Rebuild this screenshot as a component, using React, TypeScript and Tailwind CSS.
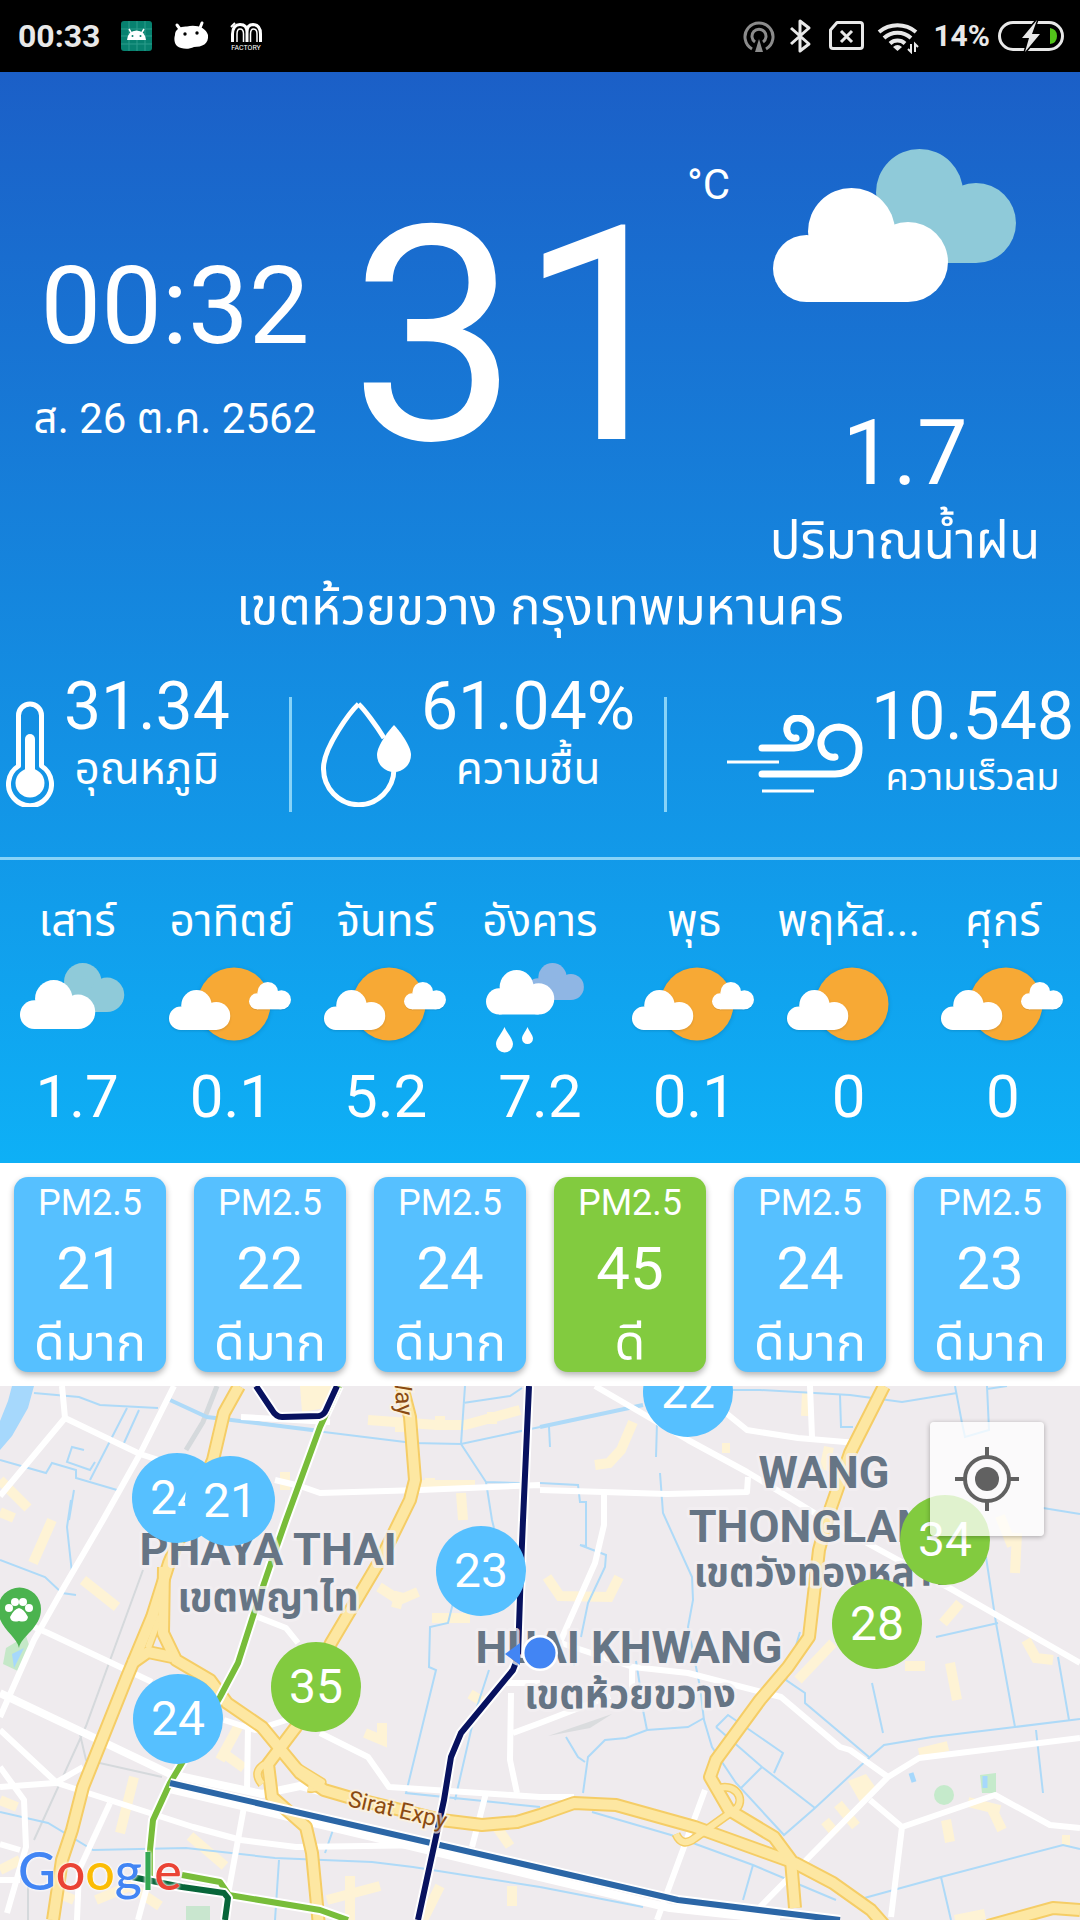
import { clsx } from "clsx";

type IconKind = "cloudy" | "partly" | "sunCloud" | "rain";

const STATS = [
  { id: "temp", value: "31.34", label: "อุณหภูมิ" },
  { id: "humidity", value: "61.04%", label: "ความชื้น" },
  { id: "wind", value: "10.548", label: "ความเร็วลม" },
];

const FORECAST: { day: string; icon: IconKind; rain: string }[] = [
  { day: "เสาร์", icon: "cloudy", rain: "1.7" },
  { day: "อาทิตย์", icon: "partly", rain: "0.1" },
  { day: "จันทร์", icon: "partly", rain: "5.2" },
  { day: "อังคาร", icon: "rain", rain: "7.2" },
  { day: "พุธ", icon: "partly", rain: "0.1" },
  { day: "พฤหัส...", icon: "sunCloud", rain: "0" },
  { day: "ศุกร์", icon: "partly", rain: "0" },
];

const AIR = [
  { pm: 21, level: "ดีมาก", good: false },
  { pm: 22, level: "ดีมาก", good: false },
  { pm: 24, level: "ดีมาก", good: false },
  { pm: 45, level: "ดี", good: true },
  { pm: 24, level: "ดีมาก", good: false },
  { pm: 23, level: "ดีมาก", good: false },
];

// marker centres on the 1080 x 534 map canvas
const MARKERS = [
  { pm: 24, x: 177, y: 112, green: false },
  { pm: 21, x: 230, y: 115, green: false },
  { pm: 22, x: 688, y: 6, green: false },
  { pm: 23, x: 481, y: 185, green: false },
  { pm: 24, x: 178, y: 333, green: false },
  { pm: 35, x: 316, y: 301, green: true },
  { pm: 34, x: 945, y: 154, green: true },
  { pm: 28, x: 877, y: 238, green: true },
];

const WATER = [
  "M34 7L79 11L100 19L158 22",
  "M241 34L324 46L413 57L461 58L540 41",
  "M733 4H760L850 9L902 16L957 7",
  "M840 9L841 41H853",
  "M955 0L962 37L965 51L989 44L987 0M987 3L1007 0",
  "M549 41L550 61",
  "M657 37L656 71M660 87L663 127L692 191L693 214L688 241L700 301L704 334L712 361L736 397L784 449L815 422L870 371L884 359L932 351L1015 341L1080 333",
  "M540 97L578 99L580 116H586V160L580 159L606 169L605 181L588 217L581 251",
  "M800 246L786 294L805 307V317L869 371",
  "M986 171L996 237L1015 341M936 251L998 237M1058 271L1069 334M1036 344L1043 407",
  "M1043 122L1080 128M872 297L883 347",
  "M716 341L728 329L783 367L774 387M716 341L762 381L815 422M762 381L741 402",
  "M704 332L688 341L647 344L626 352L605 354L588 371L583 407M643 324L647 344M566 351L578 371L585 376",
  "M540 501L643 521M592 426L671 449L753 479L836 514M753 479L743 514M857 514L941 491L1063 459L1080 463M941 491L951 534",
  "M0 174L45 191L62 207L76 209M71 114L67 141L72 187",
  "M0 426L48 437L93 464L186 462L275 472L372 476L413 481L540 501",
  "M465 0L461 58L486 96L492 134L494 142M486 96L520 97M463 17L510 10L522 2",
  "M453 217L448 237L430 241L429 281L436 284L406 407L540 421M489 284L475 327L455 414",
  "M127 22L90 94M139 24L124 57M84 64L72 61L67 76L90 84L95 76M0 74L46 87L52 77L76 84V92L117 104M74 104L69 134",
  "M334 441L325 467M279 474L275 534M575 250L574 280M636 275L640 300",
];

const BLOCKS = [
  "M368 34L437 39H465L520 24M400 34V46M440 30V44M492 26V38",
  "M417 99H475M461 107L463 134M430 92V106M285 86V104",
  "M83 194L117 221M52 134L33 177M379 201L399 214L418 206M400 206L396 222",
  "M0 94L28 122M0 126L14 132M0 414L17 421M0 484L20 474M134 391L120 447M238 341L220 374M222 366L244 382M365 347L382 354V337",
  "M96 514L130 500L160 520M190 450L225 480M327 514L380 500M350 490V534M60 508L74 514M420 540L440 500",
  "M547 191L560 210L609 211L619 191M633 36L621 64L609 77L595 79M722 62H730M807 7L806 30",
  "M829 61L824 84M833 257L798 294M943 237L960 217M950 277L957 314M1026 254L1036 272L1053 274M1017 147L1015 187",
  "M919 367L948 360M991 421L1002 444M946 434L950 456M825 435L836 448M838 418L856 440M968 416L1000 424M905 280H925",
  "M470 308L490 320M432 232H470M1000 130L1012 160M955 534L985 528M1062 454H1070M496 440L510 460M512 500V520",
];

const ROADS = [
  "M62 0L65 32L0 110M65 32L140 68L165 76",
  "M174 0L140 68L103 134L64 201L34 254L0 331",
  "M34 241L48 247L152 296",
  "M0 344L57 397L193 441L241 454L296 461L434 459L540 482",
  "M0 401L55 397L83 381M0 381L24 414L26 461L7 527",
  "M110 417L79 484L77 534M244 421L227 514L224 534M248 341L247 404M148 497L138 534",
  "M258 231L286 242L298 257M224 334L255 344L296 331",
  "M320 347L368 371L389 401L540 411H574",
  "M241 31L330 36M275 94L300 100L320 107L420 104L540 99M540 104L667 108L747 106L748 91",
  "M595 0L688 54L747 86L826 134L867 157L953 204L1080 277",
  "M726 27L747 44L798 52L857 57M810 0L812 51",
  "M604 104V139L595 177L561 254M561 257L633 281L688 287L781 311L840 361L850 364L888 391M632 281V307",
  "M513 347L540 337L610 310M511 307L510 374L517 407M500 297H540",
  "M1080 352L919 372L888 391L760 521L750 534",
  "M870 414L902 441L995 409L1050 439L1080 442M902 441L891 531",
  "M705 404L657 534M486 407L472 461M0 458L20 464M0 494H20",
];

const HIGHWAYS = [
  "M239 0L224 27L213 74L169 177L152 231L127 291L83 401L72 444L62 474L53 534",
  "M164 181L163 247L176 274L210 294L227 317L262 341L300 387L324 404L348 411L441 434L482 439L517 436L540 429L574 417L616 419L695 441L795 477L833 497L871 524L885 540",
  "M131 278L148 266L172 271",
  "M402 0L410 31L415 94L410 114L382 171L331 257L296 341L268 378L272 411L306 441L312 467L319 540",
  "M884 0L850 67L829 127L819 164L809 251L788 281L760 314L716 374L710 391L729 424L774 451L791 474L795 522",
  "M1080 524L1053 522L988 540",
];

const RAMPS = [
  "M716 403C735 396 745 412 737 422L695 452Q682 462 676 448",
  "M265 378Q252 386 262 398M296 380L322 396Q318 404 308 402",
  "M160 230L148 262",
];

const TRANSIT = [
  { d: "M339 0L320 41L286 134L272 174L255 224L238 277L220 311L182 377L170 397L153 434L150 464V490", color: "#78bd3a" },
  { d: "M182 489L220 496L229 509L320 524L348 534", color: "#78bd3a" },
  { d: "M132 491L182 501L224 507L228 512L225 534", color: "#08663a" },
  { d: "M170 397L540 482L678 514L840 534", color: "#2b66a6" },
  { d: "M256 0L272 24Q276 31 282 31L319 30Q324 29 326 24L337 0", color: "#08125f" },
  { d: "M529 0L523 134L521 181L518 271L513 284L461 347L451 371L444 414L418 534", color: "#08125f" },
];

const LABELS = [
  { x: 268, y: 179, text: "PHAYA THAI", thai: false },
  { x: 268, y: 225, text: "เขตพญาไท", thai: true },
  { x: 629, y: 277, text: "HUAI KHWANG", thai: false },
  { x: 630, y: 322, text: "เขตห้วยขวาง", thai: true },
  { x: 824, y: 102, text: "WANG", thai: false },
  { x: 824, y: 156, text: "THONGLANG", thai: false },
  { x: 824, y: 200, text: "เขตวังทองหลาง", thai: true },
];

function Cloud({ transform, className }: { transform?: string; className?: string }) {
  return (
    <g transform={transform} className={className}>
      <circle cx="33.5" cy="80.5" r="33.5" />
      <circle cx="78.5" cy="43.5" r="43.5" />
      <circle cx="135" cy="74" r="40" />
      <path d="M33.5 60H135V114H33.5z" />
    </g>
  );
}

function WeatherIcon({ kind }: { kind: IconKind }) {
  return (
    <svg viewBox="0 0 128 96" className="w-32 h-24 overflow-visible" fill="#fff" aria-hidden="true">
      {kind === "cloudy" && (
        <>
          <Cloud transform="translate(36 2) scale(.43)" className="fill-[#8fcad9]" />
          <Cloud transform="translate(7 19) scale(.43)" />
        </>
      )}
      {(kind === "partly" || kind === "sunCloud") && (
        <>
          <circle cx="67" cy="43" r="36.5" className="fill-[#f7a935] drop-shadow-sm" />
          <Cloud transform="translate(2 29) scale(.35)" className="drop-shadow-md" />
        </>
      )}
      {kind === "partly" && <Cloud transform="translate(82 21) scale(.24)" className="drop-shadow-md" />}
      {kind === "rain" && (
        <>
          <Cloud transform="translate(51 2) scale(.325)" className="fill-[#8fb6e4]" />
          <Cloud transform="translate(10 9) scale(.39)" />
          <path d="M28.5 66C31 72 37 78 37 83A8.5 8.5 0 0 1 20 83C20 78 26 72 28.5 66z" />
          <path d="M51.5 66C53 70 57 74 57 77.5A5.5 5.5 0 0 1 46 77.5C46 74 50 70 51.5 66z" />
        </>
      )}
    </svg>
  );
}

function StatIcon({ id }: { id: string }) {
  if (id === "temp") {
    return (
      <svg viewBox="0 0 48 106" className="w-12 h-[106px] mt-[30px] shrink-0" fill="none" stroke="#fff" aria-hidden="true">
        <path d="M12.5 65V14.5a11.5 11.5 0 0 1 23 0V65A21.5 21.5 0 1 1 12.5 65z" strokeWidth="5" strokeLinejoin="round" />
        <path d="M24 38V80" strokeWidth="10" strokeLinecap="round" />
        <circle cx="24" cy="82" r="14.5" fill="#fff" stroke="none" />
      </svg>
    );
  }
  if (id === "humidity") {
    return (
      <svg viewBox="0 0 90 106" className="w-[90px] h-[106px] mt-[30px] shrink-0" fill="none" stroke="#fff" aria-hidden="true">
        <path d="M37.5 3C30 10 2.5 46 2.5 67A35 36 0 0 0 73 68M37.5 3C43 8 55 24 63 37" strokeWidth="5" strokeLinejoin="round" />
        <path d="M73 24C77 28 90 44 90 54A17 17 0 0 1 56 54C56 44 69 28 73 24z" fill="#fff" stroke="none" />
      </svg>
    );
  }
  return (
    <svg viewBox="0 0 136 80" className="w-[136px] h-20 mt-11 shrink-0" fill="none" stroke="#fff" aria-hidden="true">
      <path d="M35 33H67C79 33 84 25 84 15A13 13 0 0 0 71 3C62 3 59 10 60 16C61 21 64 24 69 23" strokeWidth="7" strokeLinecap="round" />
      <path d="M35 59H108C124 59 132 47 132 34A21 21 0 0 0 112 12C100 12 93 21 94 30C95 38 101 43 108 42" strokeWidth="7" strokeLinecap="round" />
      <path d="M0 47H52M35 76H87" strokeWidth="3" />
    </svg>
  );
}

function StatusBar() {
  return (
    <header className="flex items-center h-18 bg-black text-[#e8e8e8] pl-[18px] pr-4">
      <time className="text-[32px] leading-8 font-bold">00:33</time>
      <svg viewBox="0 0 142 32" className="w-[142px] h-8 ml-5" aria-hidden="true">
        <rect x="1" y="1" width="31" height="30" rx="3" fill="#07816f" />
        <path d="M9 1V31M17 1V31M25 1V31M1 9H32M1 16H32M1 24H32" stroke="#2c9c8c" strokeWidth="1" />
        <path d="M7 20a9.5 9.5 0 0 1 19 0z" fill="#fff" />
        <path d="M9 9L12 14M24 9L21 14" stroke="#fff" strokeWidth="1.5" />
        <circle cx="12.5" cy="16" r="1" fill="#07816f" />
        <circle cx="20.5" cy="16" r="1" fill="#07816f" />
        <path d="M55 15C55 9 61 6 67 6.5C75 4 86 7 88 15C89 24 82 27 74 27C68 30 61 29 57 26C54 23 54 18 55 15z" fill="#fff" />
        <path d="M60 9L57 5M80 8L82 3" stroke="#fff" strokeWidth="3" strokeLinecap="round" />
        <circle cx="65" cy="14" r="1.7" />
        <circle cx="77" cy="13" r="1.7" />
        <path d="M112.5 22V14Q113 4.5 120 4.500Q127 4.500 127 12V22M127 12Q127 4.500 133 4.500Q140.500 5 140.500 14V22" fill="none" stroke="#fff" strokeWidth="3" />
        <path d="M117 22V14Q117 9 120 9Q123.500 9 123.500 14V22M130.500 22V14Q130.500 9 133.500 9Q137 9 137 14V22" fill="none" stroke="#fff" strokeWidth="1.5" />
        <path d="M111 7L115 3" stroke="#fff" strokeWidth="2" />
        <text x="126" y="30" fontSize="7" textAnchor="middle" fill="#fff">FACTORY</text>
      </svg>
      <svg viewBox="0 0 176 36" className="w-44 h-9 ml-auto" fill="none" stroke="#e8e8e8" aria-hidden="true">
        <g stroke="#8c8c8c" strokeWidth="3">
          <path d="M9 31A14 14 0 1 1 23 31" />
          <path d="M12 24A7 7 0 1 1 20 24" />
          <path d="M16 21L20 34H12z" fill="#8c8c8c" stroke="none" />
        </g>
        <path d="M48 10L66 26L57 33V3L66 10L48 26" strokeWidth="3" strokeLinejoin="round" />
        <path d="M94 4.5H117Q119.5 4.5 119.5 7V28Q119.5 30.5 117 30.5H90Q87.5 30.5 87.5 28V12z" strokeWidth="3" strokeLinejoin="round" />
        <path d="M98 13L109 24M109 13L98 24" strokeWidth="3" />
        <path d="M136 14A29 29 0 0 1 173 14M141 20A20 20 0 0 1 168 20M147 25.5A11 11 0 0 1 162 25.5" strokeWidth="4" />
        <path d="M154.5 33L150 29Q154.5 25 159 29z" fill="#e8e8e8" stroke="none" />
        <path d="M168 26V34L165 31M172 34V26L175 29" strokeWidth="2" />
      </svg>
      <span className="ml-3.5 text-[30px] leading-8 font-bold">14%</span>
      <svg viewBox="0 0 66 34" className="w-[66px] h-[34px] ml-2" aria-hidden="true">
        <rect x="1.5" y="3.5" width="63" height="27" rx="13.5" fill="none" stroke="#e8e8e8" strokeWidth="3" />
        <path d="M52 9Q59 10 59 17Q59 24 52 25z" fill="#52c41a" />
        <path d="M39 1L24 19H31L27 33L42 15H34z" fill="#e8e8e8" stroke="#000" strokeWidth="3" paintOrder="stroke" />
      </svg>
    </header>
  );
}

function CurrentWeather() {
  return (
    <section className="text-center">
      <div className="grid grid-cols-[35fr_38fr_35fr]">
        <div className="pt-[180px]">
          <p className="text-[108px] leading-[108px]">00:32</p>
          <p className="mt-[35px] text-[42px] leading-12">ส. 26 ต.ค. 2562</p>
        </div>
        <div className="flex items-start">
          <p className="pt-[115px] text-[300px] leading-[300px]">31</p>
          <span className="pt-[89px] text-[42px] leading-12">°C</span>
        </div>
        <div className="flex flex-col items-center pt-[77px]">
          <svg viewBox="0 0 244 153" className="w-[244px] h-[153px] mr-5" aria-hidden="true">
            <Cloud transform="translate(68 0)" className="fill-[#8fcad9]" />
            <Cloud transform="translate(0 39)" className="fill-white" />
          </svg>
          <p className="mt-[107px] text-[90px] leading-[90px]">1.7</p>
          <p className="mt-3 text-[51px] leading-[60px] whitespace-nowrap">ปริมาณน้ำฝน</p>
        </div>
      </div>
      <h1 className="mt-1.5 text-[51px] leading-[60px]">เขตห้วยขวาง กรุงเทพมหานคร</h1>

      <div className="mt-[34px] grid grid-cols-[289fr_375fr_416fr] h-[189px] border-b-3 border-[#87d3f8]">
        {STATS.map((s) => (
          <div
            key={s.id}
            className={clsx(
              "flex items-start",
              s.id === "temp" && "pl-1.5 gap-2.5",
              s.id === "humidity" && "pl-8 gap-2.5",
              s.id === "wind" && "justify-end pr-1.5 gap-2",
              s.id !== "temp" && "relative before:absolute before:left-0 before:top-[26px] before:w-[3px] before:h-[115px] before:bg-[#87d3f8]"
            )}
          >
            <StatIcon id={s.id} />
            <div className={s.id === "wind" ? "mt-2.5" : ""}>
              <p className="text-[66px] leading-[72px]">{s.value}</p>
              <p className={clsx("leading-12", s.id === "wind" ? "text-[38px]" : "mt-0.5 text-[44px]")}>{s.label}</p>
            </div>
          </div>
        ))}
      </div>
    </section>
  );
}

function Forecast() {
  return (
    <ul className="grid grid-cols-7 pt-[37px] pb-[30px]">
      {FORECAST.map((f) => (
        <li key={f.day} className="flex flex-col items-center">
          <span className="text-[44px] leading-12 whitespace-nowrap">{f.day}</span>
          <div className="mt-4"><WeatherIcon kind={f.icon} /></div>
          <span className="mt-1 text-[60px] leading-[72px]">{f.rain}</span>
        </li>
      ))}
    </ul>
  );
}

function AirQuality() {
  return (
    <section className="grid grid-cols-6 gap-7 px-3.5 pt-3.5 pb-3.5 bg-white text-white text-center">
      {AIR.map((a, i) => (
        <article
          key={i}
          className={clsx(
            "pt-1.5 pb-px rounded-[14px] shadow-[0_3px_6px_rgba(0,0,0,0.3)]",
            a.good ? "bg-[#82cb3f]" : "bg-[#56c0ff]"
          )}
        >
          <p className="text-[36px] leading-10">PM2.5</p>
          <p className="mt-2.5 text-[60px] leading-[72px]">{a.pm}</p>
          <p className="mt-2.5 text-[50px] leading-14 whitespace-nowrap">{a.level}</p>
        </article>
      ))}
    </section>
  );
}

function MapDrawing() {
  return (
    <svg viewBox="0 0 1080 534" className="block w-full" role="img" aria-label="แผนที่" fill="none">
      <rect width="1080" height="534" fill="#efebee" />
      <path d="M12 0H34L28 22L12 50L0 64V35L8 15z" fill="#a6d8fc" />
      <path d="M300 0H338L325 22L302 26z" fill="#fef3d5" />
      <path d="M6 262L26 250L30 262L20 286L3 278z" fill="#c5e8c8" />
      <path d="M12 268L24 262L14 282z" fill="#a6d8fc" />
      <circle cx="944" cy="409" r="10" fill="#c5eacb" />
      <path d="M980 389L996 387V407H982z" fill="#c5eacb" />
      <path d="M985 390V402M911 387L914 396" stroke="#a6d8fc" strokeWidth="5" />
      <path d="M548 350L612 328L590 342z" fill="#dadcde" />
      <path d="M848 395L866 388L876 402L860 416z" fill="#fef3d5" />
      <path d="M186 520H210V534H186z" fill="#c9e6cf" />
      <g stroke="#fef3d5" strokeWidth="10">
        {BLOCKS.map((d) => <path key={d} d={d} />)}
      </g>
      <g stroke="#d5d9dc" strokeWidth="2">
        <path d="M217 0L203 36L186 64" strokeWidth="5" />
        <path d="M143 184L86 340L34 454M79 344L86 374L162 391M28 500V534" />
      </g>
      <g stroke="#aedaf8" strokeWidth="2">
        {WATER.map((d) => <path key={d} d={d} />)}
        <path d="M170 14L207 31L320 45M540 41L643 19" strokeWidth="4" />
      </g>
      <g stroke="#fff" strokeWidth="6" strokeLinejoin="round">
        {ROADS.map((d) => <path key={d} d={d} />)}
        <path d="M0 307L80 345L170 388L262 408L300 400L345 412M170 403L540 491L670 522L780 534" strokeWidth="8" />
      </g>
      <g strokeLinejoin="round">
        <g stroke="#f5cd66" strokeWidth="9">{RAMPS.map((d) => <path key={d} d={d} />)}</g>
        <g stroke="#f5cd66" strokeWidth="14">{HIGHWAYS.map((d) => <path key={d} d={d} />)}</g>
        <g stroke="#fde7a2" strokeWidth="6">{RAMPS.map((d) => <path key={d} d={d} />)}</g>
        <g stroke="#fde7a2" strokeWidth="10">{HIGHWAYS.map((d) => <path key={d} d={d} />)}</g>
      </g>
      <g strokeLinejoin="round">
        {TRANSIT.map((t) => (
          <g key={t.d}>
            <path d={t.d} stroke="#fff" strokeWidth="10" />
            <path d={t.d} stroke={t.color} strokeWidth="6" />
          </g>
        ))}
      </g>

      <g fill="#667585" stroke="#f3f0f2" strokeOpacity=".8" strokeWidth="6" strokeLinejoin="round" paintOrder="stroke" textAnchor="middle" className="font-bold">
        {LABELS.map((l) => (
          <text key={l.text} x={l.x} y={l.y} fontSize={l.thai ? 39 : 45}>{l.text}</text>
        ))}
      </g>
      <g fill="#8a4a12" stroke="#fdf3e0" strokeOpacity=".7" strokeWidth="4" paintOrder="stroke">
        <text transform="translate(347 420) rotate(13)" fontSize="23">Sirat Expy</text>
        <text transform="translate(397 30) rotate(86)" fontSize="24" textAnchor="end">Way</text>
      </g>

      <path d="M19 262C17 250 -2 242 -2 223A21 21 0 0 1 41 223C41 242 21 250 19 262z" fill="#4bb34f" />
      <g fill="#fff">
        <circle cx="9" cy="222" r="4" />
        <circle cx="15" cy="216" r="4" />
        <circle cx="23" cy="216" r="4" />
        <circle cx="29" cy="222" r="4" />
        <path d="M19 222Q24 223 28 231Q27 237 19 235Q11 237 10 231Q14 223 19 222z" />
      </g>
    </svg>
  );
}

function StationMap() {
  return (
    <section className="relative grow overflow-hidden bg-[#efebee]">
      <MapDrawing />
      {MARKERS.map((m, i) => (
        <button
          key={i}
          type="button"
          aria-label={`PM2.5 ${m.pm}`}
          className={clsx(
            "absolute size-[90px] -translate-1/2 rounded-full text-white text-[48px] leading-[90px] text-center",
            m.green ? "bg-[#82cb3f]" : "bg-[#56c0ff]"
          )}
          style={{ left: `${(m.x / 1080) * 100}%`, top: `${(m.y / 534) * 100}%` }}
        >
          {m.pm}
        </button>
      ))}
      <svg viewBox="0 0 60 40" className="absolute left-1/2 top-1/2 w-[60px] h-10 -translate-1/2 overflow-visible" aria-hidden="true">
        <path d="M-5 21L10 10V32z" fill="#4285f4" />
        <circle cx="30" cy="20" r="18" fill="#fff" />
        <circle cx="30" cy="20" r="15.5" fill="#4285f4" />
      </svg>
      <button
        type="button"
        aria-label="ตำแหน่งของฉัน"
        className="absolute top-9 right-9 grid place-items-center size-[114px] rounded-sm bg-white/75 shadow-[0_1px_5px_rgba(0,0,0,0.3)]"
      >
        <svg viewBox="0 0 64 64" className="size-16" fill="none" stroke="#616161" strokeWidth="4" aria-hidden="true">
          <circle cx="32" cy="32" r="22" />
          <circle cx="32" cy="32" r="12" fill="#616161" stroke="none" />
          <path d="M32 0V10M32 54V64M0 32H10M54 32H64" />
        </svg>
      </button>
      <a
        href="#map"
        aria-label="Google"
        className="absolute left-[18px] bottom-5 font-['Lato',sans-serif] text-[52px] leading-[60px] font-medium [text-shadow:0_0_3px_#fff,0_0_3px_#fff]"
      >
        <span className="text-[#4285f4]">G</span>
        <span className="text-[#ea4335]">o</span>
        <span className="text-[#fbbc05]">o</span>
        <span className="text-[#4285f4]">g</span>
        <span className="text-[#34a853]">l</span>
        <span className="text-[#ea4335]">e</span>
      </a>
    </section>
  );
}

export default function App() {
  return (
    <main className="flex flex-col min-h-screen font-['Roboto','Noto_Sans_Thai',sans-serif]">
      <StatusBar />
      <div className="text-white bg-linear-to-b from-[#1b5fc7] to-[#0eb0f6]">
        <CurrentWeather />
        <Forecast />
      </div>
      <AirQuality />
      <StationMap />
    </main>
  );
}
